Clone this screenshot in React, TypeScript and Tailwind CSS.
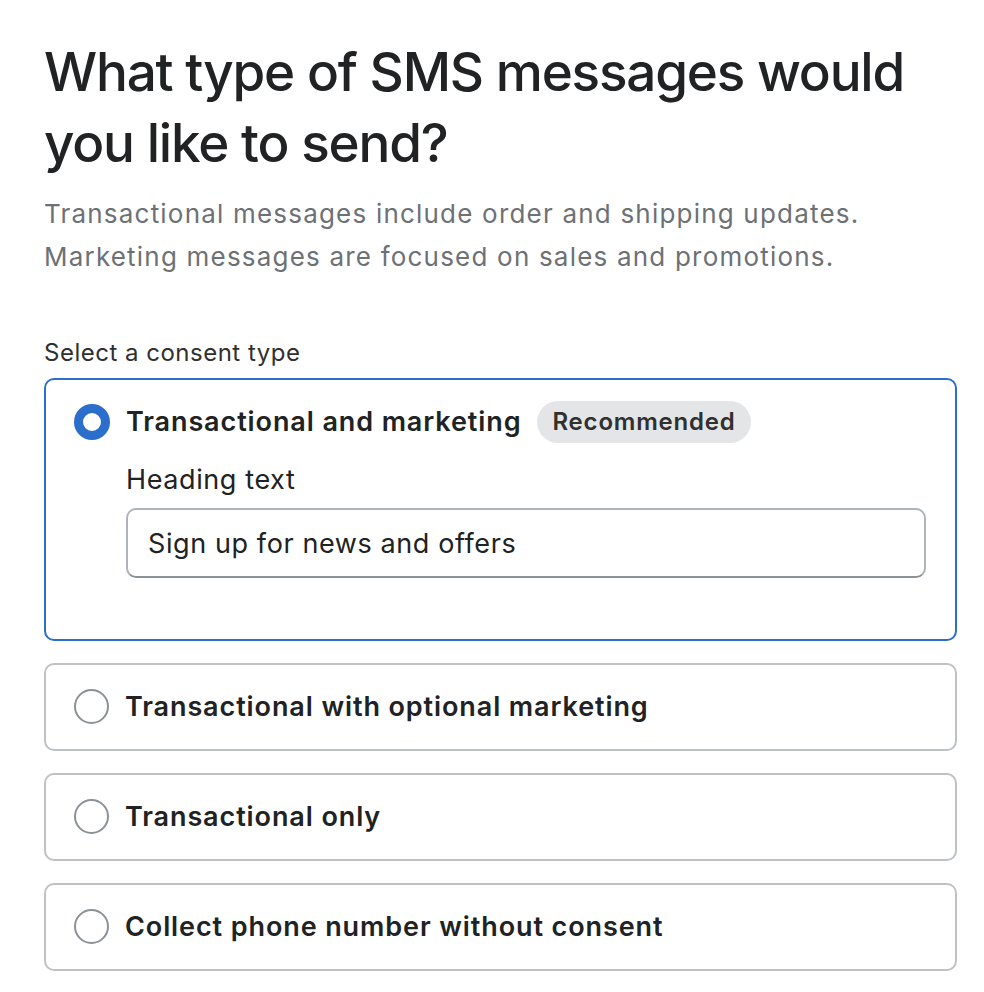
import { useState } from 'react';

const OPTIONS = [
  { id: 'both', label: 'Transactional and marketing', badge: 'Recommended' },
  { id: 'optional', label: 'Transactional with optional marketing' },
  { id: 'transactional', label: 'Transactional only' },
  { id: 'none', label: 'Collect phone number without consent' },
];

function Radio({ checked }: { checked: boolean }) {
  if (checked) {
    return <span className="block h-[36px] w-[36px] shrink-0 rounded-full border-[9.5px] border-[#2c6ecb] bg-white" />;
  }
  return <span className="block h-[35px] w-[35px] shrink-0 rounded-full border-[2.5px] border-[#8c9196] bg-white" />;
}

export default function App() {
  const [selected, setSelected] = useState('both');
  const [heading, setHeading] = useState('Sign up for news and offers');

  return (
    <div className="min-h-screen bg-white pl-[44px] pr-[27px] pt-[37px] font-['Inter',sans-serif] text-[#202223]">
      <h1 className="text-[53px] font-medium leading-[71px] tracking-[-1.2px] text-[#202223]">
        What type of SMS messages would
        <br />
        you like to send?
      </h1>
      <p className="mt-[13px] text-[26px] leading-[43px] tracking-[1.2px] text-[#6d7175]">
        Transactional messages include order and shipping updates.
        <br />
        Marketing messages are focused on sales and promotions.
      </p>

      <p className="mt-[58px] text-[24px] leading-[34px] tracking-[0.5px] text-[#303030]">Select a consent type</p>

      <div className="mt-[8px] flex flex-col gap-[21.5px]">
        {OPTIONS.map((opt) => {
          const checked = selected === opt.id;
          return (
            <div
              key={opt.id}
              onClick={() => setSelected(opt.id)}
              className={
                checked
                  ? 'cursor-pointer rounded-[10px] border-2 border-[#2c6ecb] pl-[28px] pr-[29px] pt-[23px] pb-[61px]'
                  : 'cursor-pointer rounded-[10px] border-2 border-[#bfc2c5] pl-[28px] pr-[29px] py-[23.25px]'
              }
            >
              <div className="flex h-[38px] items-center">
                <Radio checked={checked} />
                <span className="ml-[16px] text-[27px] font-semibold tracking-[0.9px] text-[#202223]">{opt.label}</span>
                {opt.badge && (
                  <span className="ml-[16px] flex h-[42px] items-center rounded-full bg-[#e4e5e7] px-[15px] text-[24px] font-semibold tracking-[0.8px] text-[#303030]">
                    {opt.badge}
                  </span>
                )}
              </div>
              {checked && opt.id === 'both' && (
                <div className="ml-[52px]">
                  <label className="mt-[19px] block text-[27px] leading-[40px] tracking-[0.6px] text-[#202223]">Heading text</label>
                  <input
                    value={heading}
                    onChange={(e) => setHeading(e.target.value)}
                    className="mt-[8px] h-[70px] w-full rounded-[10px] border-2 border-[#aeb4b9] border-b-[#8c9196] px-[20px] text-[27px] tracking-[0.6px] text-[#202223] outline-none"
                  />
                </div>
              )}
            </div>
          );
        })}
      </div>
    </div>
  );
}
